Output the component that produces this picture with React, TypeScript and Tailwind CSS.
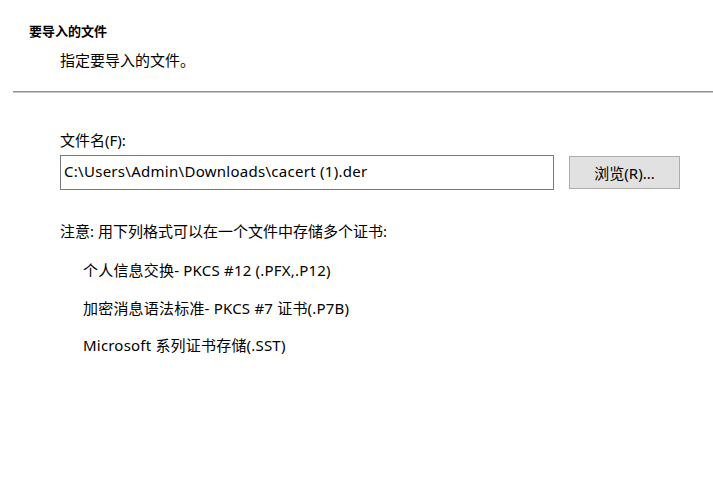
const formats = [
  "个人信息交换- PKCS #12 (.PFX,.P12)",
  "加密消息语法标准- PKCS #7 证书(.P7B)",
  "Microsoft 系列证书存储(.SST)",
];

export default function App() {
  return (
    <div className="w-[713px] h-[498px] bg-white text-black font-['Noto_Sans','Noto_Sans_CJK_SC',sans-serif] overflow-hidden">
      <div className="pt-[21px]">
        <div className="pl-[29px] text-[13px] leading-[20px] font-bold">要导入的文件</div>
        <div className="pl-[60px] mt-[9px] text-[15px] leading-[20px]">指定要导入的文件。</div>
      </div>
      <div className="ml-[13px] mt-[21px] border-t border-[#8f8f8f] border-b border-b-[#c9c9c9]" />
      <div className="pl-[60px] pt-[37px] text-[15px] leading-[20px]">
        <div>文件名(F):</div>
        <div className="mt-[5px] flex items-center">
          <div className="w-[494px] h-[35px] border border-[#7a7a7a] pl-[3px] flex items-center pb-[4px] tracking-[0.28px]">
            C:\Users\Admin\Downloads\cacert (1).der
          </div>
          <button className="ml-[15px] w-[111px] h-[33px] bg-[#e1e1e1] border border-[#adadad] text-[15px] leading-[20px]">
            浏览(R)...
          </button>
        </div>
        <div className="mt-[31px]">注意: 用下列格式可以在一个文件中存储多个证书:</div>
        <div className="mt-[19px] pl-[23px] flex flex-col gap-[17.5px] tracking-[0.2px]">
          {formats.map((f) => (
            <div key={f}>{f}</div>
          ))}
        </div>
      </div>
    </div>
  );
}
